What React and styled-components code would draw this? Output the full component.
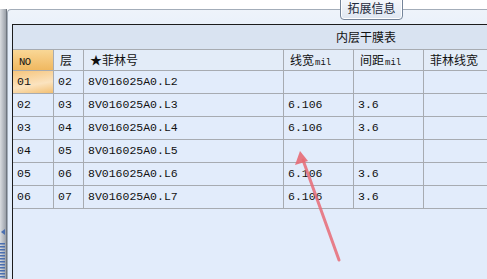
import React from "react"
import styled, { createGlobalStyle } from "styled-components"

const GlobalStyle = createGlobalStyle`
  html, body {
    margin: 0;
    padding: 0;
    background: #fff;
  }
`

const Page = styled.div`
  position: relative;
  width: 487px;
  height: 279px;
  overflow: hidden;
  background: #fff;
  padding-top: 9px;
  box-sizing: border-box;
  display: flex;
  font-family: "Noto Sans CJK SC", "Liberation Sans", sans-serif;
`

const SideBar = styled.div`
  position: relative;
  width: 6px;
  flex-shrink: 0;
  background: linear-gradient(to right, #d9dce0, #b3b8bf 60%, #9aa0a8);
  border-right: 1px solid #6f767f;
`

const Grip = styled.svg`
  position: absolute;
  left: 0;
  top: 210px;
`

const Panel = styled.div`
  flex: 1;
  min-width: 0;
  display: flex;
  flex-direction: column;
  border-top: 1px solid #a3adb9;
  border-left: 1px solid #a3adb9;
  border-top-left-radius: 4px;
  background: linear-gradient(#eef3fa, #e3edfa 40px);
  padding: 14px 0 0 4px;
  overflow: hidden;
`

const Tab = styled.div`
  position: absolute;
  left: 340px;
  top: -4px;
  width: 63px;
  height: 24px;
  box-sizing: border-box;
  padding-top: 3px;
  border: 1px solid #75859a;
  border-radius: 0 0 4px 4px;
  background: linear-gradient(#f7f9fc, #dfe7f1);
  box-shadow: inset 0 0 0 1px #fff;
  text-align: center;
  font-size: 12px;
  line-height: 15px;
  color: #1c2a3c;
`

const Table = styled.div`
  flex: 1;
  width: 706px;
  display: grid;
  grid-template-columns: 41px 30px 200px 70px 70px 70px 1fr;
  align-content: start;
  border-top: 1px solid #1c1c1c;
  border-left: 1px solid #1c1c1c;
  background: #e2ecfb;
`

const Band = styled.div`
  grid-column: 1 / -1;
  height: 25px;
  box-sizing: border-box;
  border-bottom: 1px solid #a7abb1;
  background: #d9e3f1;
  text-align: center;
  font-size: 12px;
  line-height: 24px;
  color: #111;
`

const Cell = styled.div`
  height: ${(p) => (p.$head ? 21 : 23)}px;
  box-sizing: border-box;
  border-right: 1px solid #a7abb1;
  border-bottom: 1px solid #a7abb1;
  padding-left: ${(p) => (p.$head ? 6 : 4)}px;
  line-height: ${(p) => (p.$head ? 20 : 22)}px;
  white-space: nowrap;
  overflow: hidden;
  color: #111;
  font-size: ${(p) => (p.$head ? 12 : 11.5)}px;
  font-family: ${(p) =>
    p.$head
      ? '"Noto Sans CJK SC", "Liberation Sans", sans-serif'
      : '"Liberation Mono", "DejaVu Sans Mono", monospace'};
  background: ${(p) =>
    p.$orange
      ? "linear-gradient(#f9d796, #f0b860)"
      : p.$sel
      ? "linear-gradient(170deg, #f6c57c, #fbe3bf 60%, #f3c073)"
      : p.$head
      ? "#e3ecf8"
      : "#e2ecfb"};
`

const NoText = styled.span`
  font-family: "Liberation Mono", monospace;
  font-size: 10.5px;
  letter-spacing: -0.5px;
`

const Unit = styled.span`
  font-family: "Liberation Mono", monospace;
  font-size: 9px;
  margin-left: 1px;
`

const Arrow = styled.svg`
  position: absolute;
  left: 0;
  top: 0;
  pointer-events: none;
`

const rows = [
  ["01", "02", "8V016025A0.L2", "", ""],
  ["02", "03", "8V016025A0.L3", "6.106", "3.6"],
  ["03", "04", "8V016025A0.L4", "6.106", "3.6"],
  ["04", "05", "8V016025A0.L5", "", ""],
  ["05", "06", "8V016025A0.L6", "6.106", "3.6"],
  ["06", "07", "8V016025A0.L7", "6.106", "3.6"],
]

export default function App() {
  return (
    <Page>
      <GlobalStyle />
      <SideBar>
        <Grip width="6" height="70" viewBox="0 0 6 70">
          <polygon points="5,10 1,13 5,16" fill="#4a6fb0" />
          {Array.from({ length: 14 }).map((_, i) => (
            <rect key={i} x="0" y={24 + i * 3} width="5" height="1.5" fill="#4a6fb0" />
          ))}
        </Grip>
      </SideBar>
      <Panel>
        <Table>
          <Band>内层干膜表</Band>
          <Cell $head $orange>
            <NoText>NO</NoText>
          </Cell>
          <Cell $head>层</Cell>
          <Cell $head>★菲林号</Cell>
          <Cell $head>
            线宽<Unit>mil</Unit>
          </Cell>
          <Cell $head>
            间距<Unit>mil</Unit>
          </Cell>
          <Cell $head>菲林线宽</Cell>
          <Cell $head />
          {rows.map((r, i) => (
            <React.Fragment key={r[0]}>
              <Cell $sel={i === 0}>{r[0]}</Cell>
              <Cell>{r[1]}</Cell>
              <Cell>{r[2]}</Cell>
              <Cell>{r[3]}</Cell>
              <Cell>{r[4]}</Cell>
              <Cell />
              <Cell />
            </React.Fragment>
          ))}
        </Table>
      </Panel>
      <Tab>拓展信息</Tab>
      <Arrow width="487" height="279" viewBox="0 0 487 279">
        <line x1="339" y1="260" x2="303" y2="160" stroke="#e76b76" strokeOpacity="0.85" strokeWidth="3" strokeLinecap="round" />
        <polygon points="300,151 295,165 308,161" fill="#e76b76" fillOpacity="0.9" />
      </Arrow>
    </Page>
  )
}
